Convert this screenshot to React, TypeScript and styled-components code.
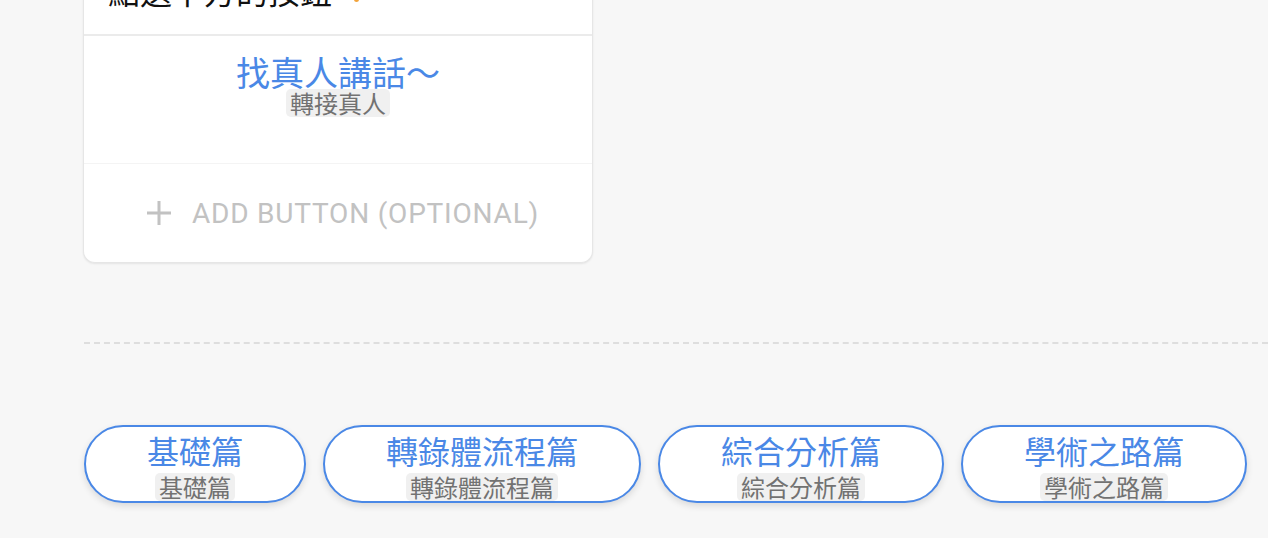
import React from "react";
import styled, { createGlobalStyle } from "styled-components";

const GlobalStyle = createGlobalStyle`
  html, body {
    margin: 0;
    padding: 0;
    background: #f7f7f7;
    overflow: hidden;
  }
  body {
    font-family: Roboto, "Noto Sans CJK TC", "Noto Sans", sans-serif;
  }
`;

const blue = "#4a88e6";

const Page = styled.div`
  width: 1268px;
  height: 538px;
  box-sizing: border-box;
  padding-left: 84px;
  overflow: hidden;
`;

const Card = styled.div`
  width: 510px;
  margin-left: -1px;
  margin-top: -46px;
  background: #fff;
  border: 1px solid #e6e6e6;
  border-top: none;
  border-radius: 0 0 12px 12px;
  box-shadow: 0 1px 2px rgba(0, 0, 0, 0.08);
  box-sizing: border-box;
`;

const MessageText = styled.div`
  height: 82px;
  box-sizing: border-box;
  padding: 14px 0 0 24px;
  font-family: "Noto Sans CJK TC", sans-serif;
  font-size: 32px;
  line-height: 44px;
  color: #111;
  border-bottom: 2px solid #ebebeb;
  display: flex;
  align-items: flex-start;
`;

const Pointer = styled.span`
  display: inline-block;
  width: 5px;
  height: 4px;
  margin: 30px 0 0 22px;
  background: #f2a33a;
  border-radius: 0 0 3px 3px;
`;

const ButtonArea = styled.div`
  height: 128px;
  box-sizing: border-box;
  padding-top: 19px;
  display: flex;
  flex-direction: column;
  align-items: center;
  border-bottom: 1px solid #f4f4f4;
`;

const Title = styled.div<{ $size: number }>`
  font-family: "Noto Sans CJK TC", sans-serif;
  font-size: ${(p) => p.$size}px;
  line-height: ${(p) => (p.$size === 34 ? 34 : 40)}px;
  margin-bottom: ${(p) => (p.$size === 34 ? 0 : 3)}px;
  color: ${blue};
  white-space: nowrap;
`;

const Label = styled.span`
  font-family: "Noto Sans CJK TC", sans-serif;
  font-size: 24px;
  line-height: 28px;
  height: 28px;
  padding: 0 4px;
  border-radius: 5px;
  background: #f0f0f0;
  color: #727272;
  white-space: nowrap;
`;

const AddRow = styled.div`
  height: 98px;
  display: flex;
  align-items: center;
  justify-content: center;
  gap: 21px;
  padding-left: 10px;
  color: #c2c2c2;
  font-size: 28px;
  letter-spacing: 0.8px;
`;

const Divider = styled.div`
  margin-top: 79px;
  height: 0;
  border-top: 2px dashed #dedede;
  margin-right: -20px;
`;

const PillRow = styled.div`
  margin-top: 81px;
  display: flex;
  gap: 17px;
`;

const Pill = styled.div`
  height: 78px;
  box-sizing: border-box;
  padding: 0 61px;
  border: 2px solid ${blue};
  border-radius: 40px;
  background: #fff;
  box-shadow: 0 3px 7px rgba(0, 0, 0, 0.12);
  display: flex;
  flex-direction: column;
  align-items: center;
  justify-content: flex-end;
`;

const PlusIcon = () => (
  <svg width="24" height="24" viewBox="0 0 24 24">
    <rect x="10.5" y="0" width="3" height="24" fill="#c2c2c2" />
    <rect x="0" y="10.5" width="24" height="3" fill="#c2c2c2" />
  </svg>
);

const chapters = ["基礎篇", "轉錄體流程篇", "綜合分析篇", "學術之路篇"];

export default function App() {
  return (
    <Page>
      <GlobalStyle />
      <Card>
        <MessageText>
          點選下方的按鈕
          <Pointer />
        </MessageText>
        <ButtonArea>
          <Title $size={34}>找真人講話～</Title>
          <Label>轉接真人</Label>
        </ButtonArea>
        <AddRow>
          <PlusIcon />
          <span>ADD BUTTON (OPTIONAL)</span>
        </AddRow>
      </Card>
      <Divider />
      <PillRow>
        {chapters.map((c) => (
          <Pill key={c}>
            <Title $size={32}>{c}</Title>
            <Label>{c}</Label>
          </Pill>
        ))}
      </PillRow>
    </Page>
  );
}
